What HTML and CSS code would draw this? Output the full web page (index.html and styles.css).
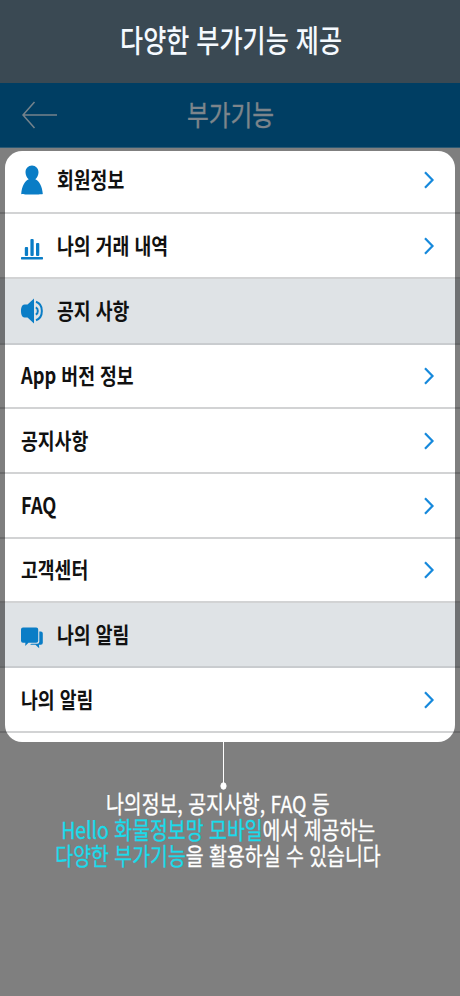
FILE: index.html
```
<!DOCTYPE html>
<html lang="ko">
<head>
<meta charset="utf-8">
<title>부가기능</title>
<link rel="stylesheet" href="styles.css">
</head>
<body>
<header class="banner"><h1 class="t">다양한 부가기능 제공</h1></header>
<nav class="appbar">
  <svg class="back" width="36" height="28" viewBox="0 0 36 28"><path d="M12.5 1 1 14 12.5 27M1 14H35"/></svg>
  <h2 class="t">부가기능</h2>
</nav>
<main class="screen">
  <ul class="list">
    <li class="row r1">
      <svg class="icon" width="22" height="30" viewBox="0 0 22 30"><path d="M11 .5C7.200.5 4.500 3.500 4.500 7.200c0 2.800 1.400 5.500 3.200 7C4 15.800.8 21 .2 29c3 .8 18.600.8 21.600 0-.6-8-3.800-13.200-7.500-14.800 1.800-1.500 3.200-4.200 3.200-7C17.500 3.500 14.800.5 11 .5z"/></svg>
      <span class="t">회원정보</span>
      <svg class="chev" width="12" height="18" viewBox="0 0 12 18"><path d="M2 1.300 9.500 9 2 16.700"/></svg>
    </li>
    <li class="row r2">
      <svg class="icon low" width="22" height="22" viewBox="0 0 22 22"><rect x="3.800" y="9" width="3.300" height="9" rx="1"/><rect x="9.400" y="1" width="3.300" height="17" rx="1"/><rect x="15" y="5" width="3.300" height="13" rx="1"/><rect x="0" y="19" width="22" height="2.400" rx=".6"/></svg>
      <span class="t">나의 거래 내역</span>
      <svg class="chev" width="12" height="18" viewBox="0 0 12 18"><path d="M2 1.300 9.500 9 2 16.700"/></svg>
    </li>
    <li class="row group r3">
      <svg class="icon" width="22" height="26" viewBox="0 0 22 26"><path d="M13 .5v25L6.500 19.500H3.500C1 19.500 0 16.500 0 13s1-6.500 3.500-6.500h3z"/><path class="wave" d="M14.800 9.300c2.700 1.300 2.700 6.100 0 7.400M15 3.800c7.800 2.500 7.800 15.900 0 18.400"/></svg>
      <span class="t">공지 사항</span>
    </li>
    <li class="row r4"><span class="t">App 버전 정보</span>
      <svg class="chev" width="12" height="18" viewBox="0 0 12 18"><path d="M2 1.300 9.500 9 2 16.700"/></svg></li>
    <li class="row r5"><span class="t">공지사항</span>
      <svg class="chev" width="12" height="18" viewBox="0 0 12 18"><path d="M2 1.300 9.500 9 2 16.700"/></svg></li>
    <li class="row r6"><span class="t">FAQ</span>
      <svg class="chev" width="12" height="18" viewBox="0 0 12 18"><path d="M2 1.300 9.500 9 2 16.700"/></svg></li>
    <li class="row r7"><span class="t">고객센터</span>
      <svg class="chev" width="12" height="18" viewBox="0 0 12 18"><path d="M2 1.300 9.500 9 2 16.700"/></svg></li>
    <li class="row group r8">
      <svg class="icon low" width="22" height="22" viewBox="0 0 22 22"><path d="M2 .5h13.200a2 2 0 0 1 2 2v11.300a2 2 0 0 1-2 2H7.500L4.200 19l.2-3.200H2a2 2 0 0 1-2-2V2.500a2 2 0 0 1 2-2z"/><path d="M18.300 4.500h1.500a2 2 0 0 1 2 2v9.300a2 2 0 0 1-2 2H18l.2 3.400-3.800-3.400H9l1.500-1h5.800a2 2 0 0 0 2-2z"/></svg>
      <span class="t">나의 알림</span>
    </li>
    <li class="row r9"><span class="t">나의 알림</span>
      <svg class="chev" width="12" height="18" viewBox="0 0 12 18"><path d="M2 1.300 9.500 9 2 16.700"/></svg></li>
  </ul>
  <div class="spotlight"></div>
  <section class="callout">
    <svg class="pin" width="8" height="48" viewBox="0 0 8 48"><path d="M3.500 0V42"/><ellipse cx="3.500" cy="44" rx="2.600" ry="3.300"/></svg>
    <p class="t">나의정보, 공지사항, FAQ 등</p>
    <p class="t"><em>Hello 화물정보망 모바일</em>에서 제공하는</p>
    <p class="t"><em>다양한 부가기능</em>을 활용하실 수 있습니다</p>
  </section>
</main>
</body>
</html>
```
FILE: styles.css
```
* { box-sizing: border-box; margin: 0; padding: 0; }
body {
  width: 460px;
  height: 996px;
  overflow: hidden;
  background: #808080;
  font-family: "Noto Sans CJK KR", "Noto Sans", sans-serif;
}
.t { display: block; white-space: nowrap; transform: scaleX(.83); }
.banner {
  height: 83px;
  background: #3a4953;
  display: flex;
  justify-content: center;
  align-items: center;
  padding: 0 0 6px 2px;
}
.banner .t {
  color: #f5faff;
  font-size: 31px;
  font-weight: 500;
  line-height: 40px;
  transform: scaleX(.81);
}
.appbar {
  height: 65px;
  background: #003e63;
  display: grid;
  grid-template-columns: 22px 36px 1fr 57px;
  align-items: center;
  border-bottom: 1px solid #2c5a75;
}
.back { grid-column: 2; fill: none; stroke: #75838c; stroke-width: 1.5; }
.appbar .t {
  grid-column: 3;
  padding-bottom: 3px;
  text-align: center;
  color: #7d858b;
  font-size: 28.500px;
  font-weight: 400;
  line-height: 40px;
  -webkit-text-stroke: .4px currentColor;
}
.screen { position: relative; height: 848px; padding-top: 3px; overflow: hidden; background: #fff; }
.list { list-style: none; }
.row {
  height: 65px;
  padding: 0 25px 0 21px;
  display: flex;
  align-items: center;
  border-bottom: 2px solid #d2d3d4;
}
.r1 { height: 63px; padding-bottom: 3px; }
.r3 { height: 66px; }
.r4, .r7 { height: 64px; }
.row .t {
  padding-bottom: 4px;
  transform-origin: left center;
  color: #111;
  font-size: 22px;
  font-weight: 700;
  line-height: 32px;
}
.group { background: #dfe3e6; border-bottom-color: #c9cccf; }
.icon { flex: none; margin-right: 14px; fill: #0a7dc6; }
.low { transform: translateY(3px); }
.wave { fill: none; stroke: #0a7dc6; stroke-width: 2; }
.chev { margin-left: auto; fill: none; stroke: #1689dc; stroke-width: 2.200; }
.spotlight {
  position: absolute;
  left: 5px;
  top: 3px;
  width: 450px;
  height: 591px;
  border-radius: 17px;
  box-shadow: 0 0 0 1000px rgba(0, 0, 0, .5);
}
.callout {
  position: relative;
  display: flex;
  flex-direction: column;
  align-items: center;
  padding: 9px 24px 0 0;
  color: #fff;
}
.pin { margin-left: 11px; fill: #fff; stroke: #fff; stroke-width: 1; }
.callout .t {
  font-size: 23.400px;
  font-weight: 400;
  line-height: 26px;
  -webkit-text-stroke: .3px currentColor;
}
.callout em { font-style: normal; color: #19dcec; }
```
